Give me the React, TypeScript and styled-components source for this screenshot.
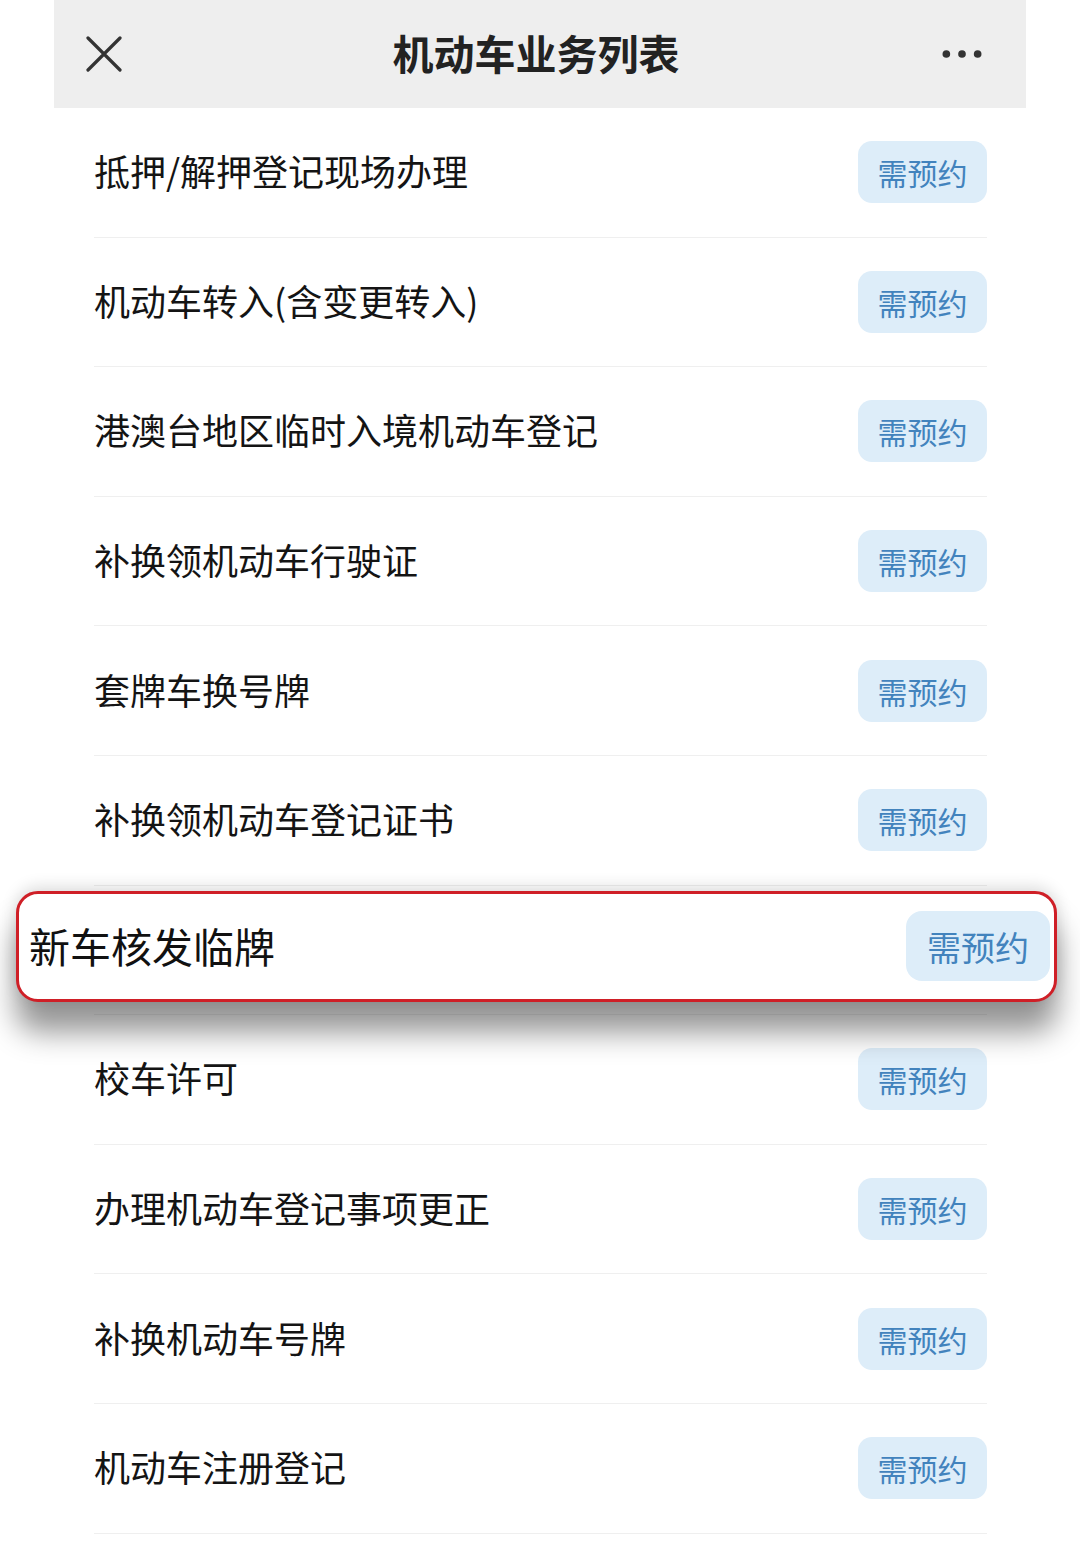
import React from 'react';
import styled, { createGlobalStyle } from 'styled-components';

const GlobalStyle = createGlobalStyle`
    body {
        margin: 0;
        background: #ffffff;
        font-family: "Noto Sans CJK SC", "Noto Sans", sans-serif;
    }
`;

const Page = styled.div`
    width: 1080px;
    height: 1559px;
    overflow: hidden;
    background: #ffffff;
`;

const Column = styled.div`
    margin: 0 54px;
    position: relative;
`;

const Header = styled.div`
    height: 108px;
    background: #eeeeee;
    display: flex;
    align-items: center;
    justify-content: space-between;
    padding: 0 44px 0 30px;
    box-sizing: border-box;
`;

const Title = styled.div`
    font-size: 41px;
    font-weight: 700;
    color: #222222;
    margin-left: 6px;
    padding-bottom: 4px;
`;

const IconBox = styled.div`
    width: 40px;
    height: 40px;
    display: flex;
    align-items: center;
    justify-content: center;
`;

const List = styled.div`
    display: flex;
    flex-direction: column;
`;

const Row = styled.div`
    position: relative;
    height: 129.6px;
    margin: 0 39px 0 40px;
    display: flex;
    align-items: center;
    justify-content: space-between;
    border-bottom: 1.5px solid #efefef;
    box-sizing: border-box;
`;

const ItemName = styled.div`
    font-size: 36px;
    color: #141414;
    padding-bottom: 4px;
`;

const Badge = styled.div<{ $big?: boolean }>`
    width: ${(p) => (p.$big ? '144px' : '129px')};
    height: ${(p) => (p.$big ? '70px' : '62px')};
    border-radius: ${(p) => (p.$big ? '16px' : '14px')};
    background: #ddedf9;
    color: #4283bd;
    font-size: ${(p) => (p.$big ? '34px' : '30px')};
    display: flex;
    align-items: center;
    justify-content: center;
    flex-shrink: 0;
`;

const Callout = styled.div`
    position: absolute;
    left: -78px;
    right: -70px;
    top: 5px;
    height: 111px;
    background: #ffffff;
    border: 3px solid #cf1f27;
    border-radius: 22px;
    box-sizing: border-box;
    display: flex;
    align-items: center;
    justify-content: space-between;
    padding: 0 4px 0 10px;
    box-shadow: 0 30px 30px rgba(0, 0, 0, 0.42), 0 -4px 16px rgba(0, 0, 0, 0.14);
    z-index: 2;
`;

const CalloutName = styled.div`
    font-size: 41px;
    color: #111111;
    padding-bottom: 2px;
`;

const items = [
    '抵押/解押登记现场办理',
    '机动车转入(含变更转入)',
    '港澳台地区临时入境机动车登记',
    '补换领机动车行驶证',
    '套牌车换号牌',
    '补换领机动车登记证书',
    '新车核发临牌',
    '校车许可',
    '办理机动车登记事项更正',
    '补换机动车号牌',
    '机动车注册登记',
];

const highlighted = '新车核发临牌';

const App: React.FC = () => {
    return (
        <Page>
            <GlobalStyle />
            <Column>
                <Header>
                    <IconBox>
                        <svg width="36" height="36" viewBox="0 0 36 36">
                            <path d="M2 2 L34 34 M34 2 L2 34" stroke="#333" strokeWidth="3.2" strokeLinecap="round" />
                        </svg>
                    </IconBox>
                    <Title>机动车业务列表</Title>
                    <IconBox>
                        <svg width="46" height="10" viewBox="0 0 46 10">
                            <circle cx="5" cy="5" r="4.4" fill="#333" />
                            <circle cx="23" cy="5" r="4.4" fill="#333" />
                            <circle cx="41" cy="5" r="4.4" fill="#333" />
                        </svg>
                    </IconBox>
                </Header>
                <List>
                    {items.map((name) =>
                        name === highlighted ? (
                            <Row key={name}>
                                <Callout>
                                    <CalloutName>{name}</CalloutName>
                                    <Badge $big>需预约</Badge>
                                </Callout>
                            </Row>
                        ) : (
                            <Row key={name}>
                                <ItemName>{name}</ItemName>
                                <Badge>需预约</Badge>
                            </Row>
                        )
                    )}
                </List>
            </Column>
        </Page>
    );
};

export default App;
